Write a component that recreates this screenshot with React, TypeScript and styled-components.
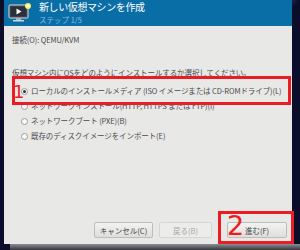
import styled, { createGlobalStyle } from 'styled-components'

const GlobalStyle = createGlobalStyle`
  html, body {
    margin: 0;
    padding: 0;
    width: 300px;
    height: 250px;
    overflow: hidden;
    background: #0a0e2a;
    font-family: 'Noto Sans CJK JP', 'Noto Sans', sans-serif;
  }
`

const Screen = styled.div`
  width: 300px;
  height: 250px;
  display: flex;
  flex-direction: column;
  background:
    linear-gradient(125deg, transparent 60%, rgba(40, 70, 160, .5) 61%, transparent 63%),
    linear-gradient(60deg, transparent 40%, rgba(40, 70, 160, .4) 41%, transparent 43%),
    #0a0e2a;
`

const Row = styled.div`
  display: flex;
`

const Window = styled.div`
  position: relative;
  margin-left: 4px;
  width: 288px;
  height: 244px;
  display: flex;
  flex-direction: column;
  background: #e8e8e7;
`

const Backdrop = styled.div`
  margin-left: 10px;
  height: 6px;
  background: linear-gradient(#8d8f93, #34363d);
`

const Header = styled.div`
  height: 26px;
  flex-shrink: 0;
  display: flex;
  align-items: flex-start;
  gap: 7px;
  padding: 3px 0 0 4px;
  box-sizing: border-box;
  background: #0a6ea6;
`

const Titles = styled.div`
  display: flex;
  flex-direction: column;
  margin-top: -4px;
`

const Title = styled.div`
  color: #ffffff;
  font-size: 10px;
  line-height: 15px;
  letter-spacing: -.4px;
`

const Step = styled.div`
  color: #84bde3;
  font-size: 7.5px;
  line-height: 11px;
`

const Body = styled.div`
  flex: 1;
  display: flex;
  flex-direction: column;
  padding: 9px 0 0 8px;
`

const Text = styled.div`
  color: #4a4a4a;
  font-size: 7.5px;
  line-height: 10px;
  letter-spacing: -.1px;
  white-space: nowrap;
`

const Description = styled(Text)`
  margin-top: 23px;
`

const Options = styled.div`
  display: flex;
  flex-direction: column;
  gap: 5px;
  margin-top: 8px;
  padding-left: 9px;
`

const Option = styled.div`
  display: flex;
  align-items: center;
  gap: 3px;
  height: 10px;
`

const Radio = styled.span<{ $checked?: boolean }>`
  width: 7px;
  height: 7px;
  border-radius: 50%;
  border: 1px solid #9a9a9a;
  background: #fbfbfb;
  box-sizing: border-box;
  display: flex;
  align-items: center;
  justify-content: center;

  &::after {
    content: '';
    width: 3px;
    height: 3px;
    border-radius: 50%;
    background: ${({ $checked }) => $checked ? '#2e2e2e' : 'transparent'};
  }
`

const Footer = styled.div`
  display: flex;
  justify-content: flex-end;
  align-items: center;
  padding: 0 5px 6px 0;
`

const Button = styled.div<{ $disabled?: boolean; $width: number }>`
  width: ${({ $width }) => $width}px;
  height: 16px;
  box-sizing: border-box;
  display: flex;
  align-items: center;
  justify-content: center;
  font-size: 7.5px;
  border-radius: 2px;
  color: ${({ $disabled }) => $disabled ? '#a8a8a8' : '#444444'};
  border: 1px solid ${({ $disabled }) => $disabled ? '#d6d6d4' : '#bcbcba'};
  background: ${({ $disabled }) => $disabled ? '#ececeb' : 'linear-gradient(#f3f3f2, #dededc)'};
  & + & {
    margin-left: 6px;
  }
`

const NextButton = styled(Button)`
  && {
    margin-left: 15px;
  }
`

const Mark = styled.div<{ $left: number; $top: number; $width: number; $height: number }>`
  position: absolute;
  left: ${({ $left }) => $left}px;
  top: ${({ $top }) => $top}px;
  width: ${({ $width }) => $width}px;
  height: ${({ $height }) => $height}px;
  border: 3px solid #ec1c24;
  box-sizing: border-box;
`

const Number = styled.span<{ $size: number; $left: number; $top: number }>`
  position: absolute;
  left: ${({ $left }) => $left}px;
  top: ${({ $top }) => $top}px;
  color: #ec1c24;
  font-family: 'DejaVu Sans', sans-serif;
  font-size: ${({ $size }) => $size}px;
  line-height: 1;
`

function MachineIcon() {
  return (
    <svg width="24" height="20" viewBox="0 0 24 20">
      <rect x="1" y="2" width="19" height="13" rx="1" fill="#39414d" stroke="#d8dde2" strokeWidth="1" />
      <rect x="3" y="4" width="15" height="9" fill="#2a313b" />
      <path d="M8.5 5.5 L13.5 8.5 L8.5 11.5 Z" fill="#ffffff" />
      <rect x="8" y="15" width="5" height="2" fill="#aab2ba" />
      <rect x="5" y="17" width="11" height="1.5" fill="#d0d5da" />
      <circle cx="20" cy="3" r="3" fill="#f7f060" />
      <circle cx="20" cy="3" r="1.6" fill="#fffbd0" />
    </svg>
  )
}

export default function App() {
  return (
    <Screen>
      <GlobalStyle />
      <Row>
        <Window>
          <Header>
            <MachineIcon />
            <Titles>
              <Title>新しい仮想マシンを作成</Title>
              <Step>ステップ 1/5</Step>
            </Titles>
          </Header>

          <Body>
            <Text>接続(O): QEMU/KVM</Text>
            <Description>仮想マシン内にOSをどのようにインストールするか選択してください。</Description>
            <Options>
              <Option>
                <Radio $checked />
                <Text>ローカルのインストールメディア (ISO イメージまたは CD-ROMドライブ)(L)</Text>
              </Option>
              <Option>
                <Radio />
                <Text>ネットワークインストール(HTTP, HTTPS または FTP)(I)</Text>
              </Option>
              <Option>
                <Radio />
                <Text>ネットワークブート (PXE)(B)</Text>
              </Option>
              <Option>
                <Radio />
                <Text>既存のディスクイメージをインポート(E)</Text>
              </Option>
            </Options>
          </Body>

          <Footer>
            <Button $width={59}>キャンセル(C)</Button>
            <Button $width={53} $disabled>戻る(B)</Button>
            <NextButton $width={60}>進む(F)</NextButton>
          </Footer>

          <Mark $left={8} $top={76} $width={279} $height={29} />
          <Number $size={18} $left={9} $top={83}>1</Number>
          <Mark $left={214} $top={211} $width={76} $height={33} />
          <Number $size={27} $left={223} $top={212}>2</Number>
        </Window>
      </Row>
      <Backdrop />
    </Screen>
  )
}
